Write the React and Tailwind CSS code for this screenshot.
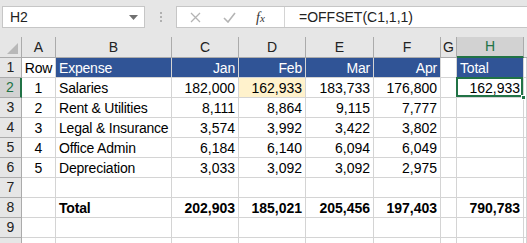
import React from 'react';

const cols = ['22px', '34px', '116px', '67px', '67px', '68px', '67px', '16px', '67px', '1fr'];
const letters = ['A', 'B', 'C', 'D', 'E', 'F', 'G', 'H'];

const rows = [
  ['1', 'Salaries', '182,000', '162,933', '183,733', '176,800'],
  ['2', 'Rent & Utilities', '8,111', '8,864', '9,115', '7,777'],
  ['3', 'Legal & Insurance', '3,574', '3,992', '3,422', '3,802'],
  ['4', 'Office Admin', '6,184', '6,140', '6,094', '6,049'],
  ['5', 'Depreciation', '3,033', '3,092', '3,092', '2,975'],
];

const cell = 'h-[20px] border-r border-b border-[#d4d4d4] flex items-center text-[14px] leading-none whitespace-nowrap';
const label = 'text-[13.5px] tracking-[-0.2px]';

const RowHead = ({ n, active }) => (
  <div
    className={`h-[20px] border-r border-b border-[#ababab] flex items-center justify-center text-[14px] ${
      active ? 'bg-[#d2d2d2] text-[#217346] border-r-2 border-r-[#217346]' : 'bg-[#e6e6e6] text-[#222]'
    }`}
  >
    {n}
  </div>
);

const App = () => {
  return (
    <div
      className="w-[527px] h-[243px] overflow-hidden bg-white text-black"
      style={{ fontFamily: '"Liberation Sans", Arial, sans-serif' }}
    >
      {/* formula bar */}
      <div className="h-[37px] bg-[#e6e6e6] flex items-start pt-[6px] pl-[2px]">
        <div className="w-[143px] h-[22px] bg-white border border-[#c6c6c6] flex items-center pl-[7px] pr-[6px]">
          <span className="text-[14px] text-[#222] flex-1">H2</span>
          <svg width="9" height="5" viewBox="0 0 9 5"><path d="M0 0h9L4.5 5z" fill="#707070" /></svg>
        </div>
        <div className="w-[31px] h-[22px] flex flex-col items-center justify-center gap-[2px]">
          <span className="w-[2px] h-[2px] bg-[#b0b0b0]" />
          <span className="w-[2px] h-[2px] bg-[#b0b0b0]" />
          <span className="w-[2px] h-[2px] bg-[#b0b0b0]" />
        </div>
        <div className="flex-1 h-[22px] bg-white border border-[#c6c6c6] border-r-0 flex items-center">
          <div className="w-[108px] flex items-center h-full border-r border-[#d4d4d4]">
            <svg className="ml-[13px]" width="11" height="11" viewBox="0 0 11 11">
              <path d="M1 1l9 9M10 1l-9 9" stroke="#b4b4b4" strokeWidth="1.3" fill="none" />
            </svg>
            <svg className="ml-[22px]" width="13" height="11" viewBox="0 0 13 11">
              <path d="M1 6l4 4 7-9" stroke="#b4b4b4" strokeWidth="1.6" fill="none" />
            </svg>
            <span className="ml-[20px] text-[14px] italic text-[#333]" style={{ fontFamily: '"Liberation Serif", serif' }}>
              f<span className="text-[11px]">x</span>
            </span>
          </div>
          <span className="pl-[14px] text-[14px] text-[#222]">=OFFSET(C1,1,1)</span>
        </div>
      </div>

      {/* grid */}
      <div className="grid" style={{ gridTemplateColumns: cols.join(' ') }}>
        {/* column headers */}
        <div className="h-[21px] bg-[#e6e6e6] border-r border-b border-[#ababab] flex items-end justify-end p-[3px]">
          <svg width="11" height="11" viewBox="0 0 11 11"><path d="M11 0v11H0z" fill="#b8b8b8" /></svg>
        </div>
        {letters.map((l) => (
          <div
            key={l}
            className={`h-[21px] border-r border-[#ababab] flex items-center justify-center text-[14px] ${
              l === 'H'
                ? 'bg-[#d2d2d2] text-[#217346] border-b-2 border-b-[#217346]'
                : 'bg-[#e6e6e6] text-[#222] border-b border-b-[#ababab]'
            }`}
          >
            {l}
          </div>
        ))}
        <div className="h-[21px] bg-[#e6e6e6] border-b border-[#ababab]" />

        {/* row 1 */}
        <RowHead n="1" />
        <div className={`${cell} ${label} justify-center`}>Row</div>
        <div className={`${cell} ${label} bg-[#305496] text-white pl-[3px] border-[#305496]`}>Expense</div>
        {['Jan', 'Feb', 'Mar', 'Apr'].map((m) => (
          <div key={m} className={`${cell} ${label} bg-[#305496] text-white justify-end pr-[3px] border-[#305496]`}>{m}</div>
        ))}
        <div className={cell} />
        <div className={`${cell} ${label} bg-[#305496] text-white pl-[3px] border-[#305496]`}>Total</div>
        <div className={cell} />

        {/* data rows */}
        {rows.map((r, i) => (
          <React.Fragment key={r[0]}>
            <RowHead n={String(i + 2)} active={i === 0} />
            <div className={`${cell} justify-center`}>{r[0]}</div>
            <div className={`${cell} ${label} pl-[3px]`}>{r[1]}</div>
            {r.slice(2).map((v, j) => (
              <div key={j} className={`${cell} justify-end pr-[3px] ${i === 0 && j === 1 ? 'bg-[#fff2cc]' : ''}`}>{v}</div>
            ))}
            <div className={cell} />
            {i === 0 ? (
              <div className={`${cell} relative justify-end pr-[3px]`}>
                162,933
                <span className="absolute -left-[1px] -top-[1px] right-0 bottom-0 border-2 border-[#217346]" />
                <span className="absolute -right-[3px] -bottom-[3px] w-[5px] h-[5px] bg-[#217346] border border-white" />
              </div>
            ) : (
              <div className={cell} />
            )}
            <div className={cell} />
          </React.Fragment>
        ))}

        {/* row 7 */}
        <RowHead n="7" />
        {Array.from({ length: 9 }).map((_, k) => <div key={k} className={cell} />)}

        {/* row 8 */}
        <RowHead n="8" />
        <div className={cell} />
        <div className={`${cell} ${label} pl-[3px] font-bold`}>Total</div>
        {['202,903', '185,021', '205,456', '197,403'].map((v) => (
          <div key={v} className={`${cell} justify-end pr-[3px] font-bold`}>{v}</div>
        ))}
        <div className={cell} />
        <div className={`${cell} justify-end pr-[3px] font-bold`}>790,783</div>
        <div className={cell} />

        {/* row 9, 10 */}
        <RowHead n="9" />
        {Array.from({ length: 9 }).map((_, k) => <div key={k} className={cell} />)}
        <RowHead n="" />
        {Array.from({ length: 9 }).map((_, k) => <div key={k} className={cell} />)}
      </div>
    </div>
  );
};

export default App;
